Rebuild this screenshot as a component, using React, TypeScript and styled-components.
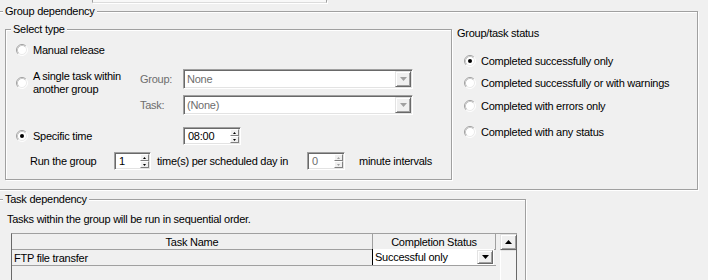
import React from "react";
import styled, { createGlobalStyle } from "styled-components";

const Global = createGlobalStyle`
  html, body { margin: 0; padding: 0; background: #f0f0f0; overflow: hidden; }
  body { font-family: "Liberation Sans", Arial, sans-serif; font-size: 11px; letter-spacing: -0.25px; color: #000; }
`;

const Page = styled.div`
  width: 708px;
  height: 280px;
  overflow: hidden;
  background: #f0f0f0;
  display: flex;
  flex-direction: column;
  align-items: flex-start;
`;

const TopStrip = styled.div`
  flex: none;
  margin-left: 92px;
  width: 233px;
  height: 2px;
  background: #f8f8f8;
  border-left: 1px solid #a0a0a0;
  border-right: 1px solid #a0a0a0;
  border-bottom: 1px solid #dcdcdc;
  box-shadow: 1px 1px 0 #fff;
`;

const GroupBox = styled.div<{ $w: number; $h: number; $mt?: number; $ml?: number }>`
  position: relative;
  flex: none;
  box-sizing: border-box;
  width: ${(p) => p.$w}px;
  height: ${(p) => p.$h}px;
  margin-top: ${(p) => p.$mt ?? 0}px;
  margin-left: ${(p) => p.$ml ?? 0}px;
  border: 1px solid #a0a0a0;
  box-shadow: 1px 1px 0 #fff, inset 1px 1px 0 #fff;
`;

const Legend = styled.span<{ $left: number }>`
  position: absolute;
  top: -8px;
  left: ${(p) => p.$left}px;
  padding: 0 2px;
  background: #f0f0f0;
  line-height: 14px;
  white-space: nowrap;
`;

const GroupDepBody = styled.div`
  display: flex;
  align-items: flex-start;
  padding: 14px 0 0 6px;
`;

const SelectBody = styled.div`
  display: flex;
  flex-direction: column;
  padding: 10px 0 0 10px;
`;

const Row = styled.div<{ $mt?: number; $h: number }>`
  display: flex;
  align-items: center;
  height: ${(p) => p.$h}px;
  margin-top: ${(p) => p.$mt ?? 0}px;
`;

const DualRow = styled.div`
  display: flex;
  align-items: flex-start;
  margin-top: 9px;
  height: 46px;
`;

const RadioLabel = styled.label<{ $w?: number; $mt?: number }>`
  display: flex;
  align-items: center;
  gap: 5px;
  flex: none;
  width: ${(p) => (p.$w ? `${p.$w}px` : "auto")};
  margin-top: ${(p) => p.$mt ?? 0}px;
  line-height: 13px;
  white-space: nowrap;
`;

const FieldGrid = styled.div`
  display: grid;
  grid-template-columns: 43px 230px;
  grid-auto-rows: 20px;
  row-gap: 6px;
  align-items: center;
`;

const DimLabel = styled.span`
  color: #6d6d6d;
  line-height: 14px;
`;

const Sunken = styled.div<{ $w: number; $h: number }>`
  box-sizing: border-box;
  display: flex;
  align-items: stretch;
  width: ${(p) => p.$w}px;
  height: ${(p) => p.$h}px;
  padding: 1px;
  background: #fff;
  border: 1px solid;
  border-color: #a0a0a0 #fff #fff #a0a0a0;
  box-shadow: inset 1px 1px 0 #696969, inset -1px -1px 0 #e3e3e3;
`;

const FieldText = styled.span<{ $dim?: boolean; $pl?: number }>`
  flex: 1;
  display: flex;
  align-items: center;
  padding-left: ${(p) => p.$pl ?? 2}px;
  color: ${(p) => (p.$dim ? "#6d6d6d" : "#000")};
  white-space: nowrap;
  overflow: hidden;
`;

const RaisedButton = styled.div<{ $w: number; $h?: number }>`
  box-sizing: border-box;
  flex: none;
  display: flex;
  align-items: center;
  justify-content: center;
  width: ${(p) => p.$w}px;
  height: ${(p) => (p.$h ? `${p.$h}px` : "auto")};
  background: #f0f0f0;
  border: 1px solid;
  border-color: #e3e3e3 #696969 #696969 #e3e3e3;
  box-shadow: inset 1px 1px 0 #fff, inset -1px -1px 0 #a0a0a0;
`;

const SpinColumn = styled.div`
  display: flex;
  flex-direction: column;
  flex: none;
`;

const SpinButton = styled.div`
  box-sizing: border-box;
  width: 9px;
  height: 7px;
  display: flex;
  align-items: center;
  justify-content: center;
  background: #f0f0f0;
  border: 1px solid;
  border-color: #fff #808080 #808080 #fff;
`;

const PlainText = styled.span<{ $w?: number; $ml?: number }>`
  flex: none;
  width: ${(p) => (p.$w ? `${p.$w}px` : "auto")};
  margin-left: ${(p) => p.$ml ?? 0}px;
  line-height: 14px;
  white-space: nowrap;
`;

const SpinWrap = styled.div`
  flex: none;
`;

const StatusColumn = styled.div`
  display: flex;
  flex-direction: column;
  padding-left: 5px;
`;

const StatusTitle = styled.span`
  line-height: 14px;
`;

const StatusItem = styled(RadioLabel)`
  height: 16px;
  margin-left: 7px;
`;

const TaskBody = styled.div`
  display: flex;
  flex-direction: column;
  align-items: flex-start;
  padding: 12px 0 0 8px;
`;

const Note = styled.span`
  line-height: 14px;
`;

const TableFrame = styled.div`
  box-sizing: border-box;
  display: flex;
  width: 506px;
  height: 70px;
  margin: 7px 0 0 4px;
  border-top: 1px solid #a0a0a0;
  border-left: 1px solid #696969;
`;

const GridArea = styled.div`
  display: flex;
  flex-direction: column;
  width: 488px;
`;

const GridRow = styled.div`
  display: flex;
  width: 484px;
  height: 16px;
  box-sizing: border-box;
  border-bottom: 1px solid #a0a0a0;
`;

const HeaderCell = styled.div<{ $w: number }>`
  box-sizing: border-box;
  width: ${(p) => p.$w}px;
  display: flex;
  align-items: center;
  justify-content: center;
  border-right: 1px solid #a0a0a0;
  line-height: 14px;
`;

const Cell = styled.div<{ $w: number }>`
  box-sizing: border-box;
  width: ${(p) => p.$w}px;
  display: flex;
  align-items: center;
  padding-left: 2px;
  line-height: 14px;
  white-space: nowrap;
`;

const CellCombo = styled.div`
  box-sizing: border-box;
  display: flex;
  align-items: stretch;
  width: 122px;
  height: 16px;
  margin-top: -1px;
  background: #fff;
  border-left: 1px solid #000;
  padding: 1px 1px 1px 0;
`;

const Scrollbar = styled.div`
  box-sizing: border-box;
  display: flex;
  flex-direction: column;
  width: 17px;
  border-right: 1px solid #696969;
`;

const ScrollTrack = styled.div`
  flex: 1;
  background: #f4f4f4;
  border-left: 1px solid #fff;
  border-top: 1px solid #e3e3e3;
`;

type ArrowProps = { dir: "up" | "down"; color: string; w?: number; h?: number };
const Arrow = ({ dir, color, w = 7, h = 4 }: ArrowProps) => (
  <svg width={w} height={h} viewBox={`0 0 ${w} ${h}`} style={{ display: "block" }}>
    {dir === "down" ? (
      <polygon points={`0,0 ${w},0 ${w / 2},${h}`} fill={color} />
    ) : (
      <polygon points={`0,${h} ${w},${h} ${w / 2},0`} fill={color} />
    )}
  </svg>
);

const Radio = ({ checked }: { checked?: boolean }) => (
  <svg width={12} height={12} viewBox="0 0 12 12" style={{ display: "block", flex: "none" }}>
    <circle cx={6} cy={6} r={5} fill="#fff" />
    <path d="M2.11 9.89 A5.5 5.5 0 0 1 9.89 2.11" stroke="#a0a0a0" strokeWidth={1} fill="none" />
    <path d="M9.89 2.11 A5.5 5.5 0 0 1 2.11 9.89" stroke="#ffffff" strokeWidth={1} fill="none" />
    <path d="M2.82 9.18 A4.5 4.5 0 0 1 9.18 2.82" stroke="#c8c8c8" strokeWidth={1} fill="none" />
    <path d="M9.18 2.82 A4.5 4.5 0 0 1 2.82 9.18" stroke="#ececec" strokeWidth={1} fill="none" />
    {checked && <circle cx={6} cy={6} r={2} fill="#000" />}
  </svg>
);

const Combo = ({ text }: { text: string }) => (
  <Sunken $w={230} $h={20}>
    <FieldText $dim>{text}</FieldText>
    <RaisedButton $w={16}>
      <Arrow dir="down" color="#a0a0a0" />
    </RaisedButton>
  </Sunken>
);

const Spin = ({ value, w, dim }: { value: string; w: number; dim?: boolean }) => (
  <SpinWrap>
    <Sunken $w={w} $h={18}>
      <FieldText $dim={dim} $pl={3}>{value}</FieldText>
      <SpinColumn>
        <SpinButton>
          <Arrow dir="up" color={dim ? "#a0a0a0" : "#000"} w={3} h={2} />
        </SpinButton>
        <SpinButton>
          <Arrow dir="down" color={dim ? "#a0a0a0" : "#000"} w={3} h={2} />
        </SpinButton>
      </SpinColumn>
    </Sunken>
  </SpinWrap>
);

export default function App() {
  return (
    <>
      <Global />
      <Page>
        <TopStrip />
        <GroupBox $w={700} $h={179} $mt={8} $ml={-2}>
          <Legend $left={4}>Group dependency</Legend>
          <GroupDepBody>
            <GroupBox $w={447} $h={151} $mt={3}>
              <Legend $left={5}>Select type</Legend>
              <SelectBody>
                <Row $h={20}>
                  <RadioLabel>
                    <Radio />
                    Manual release
                  </RadioLabel>
                </Row>
                <DualRow>
                  <RadioLabel $w={124} $mt={1}>
                    <Radio />
                    <span>
                      A single task within
                      <br />
                      another group
                    </span>
                  </RadioLabel>
                  <FieldGrid>
                    <DimLabel>Group:</DimLabel>
                    <Combo text="None" />
                    <DimLabel>Task:</DimLabel>
                    <Combo text="(None)" />
                  </FieldGrid>
                </DualRow>
                <Row $h={18} $mt={12}>
                  <RadioLabel $w={167}>
                    <Radio checked />
                    Specific time
                  </RadioLabel>
                  <Spin value="08:00" w={58} />
                </Row>
                <Row $h={18} $mt={7}>
                  <PlainText $w={84} $ml={14}>Run the group</PlainText>
                  <Spin value="1" w={37} />
                  <PlainText $w={150} $ml={6}>time(s) per scheduled day in</PlainText>
                  <Spin value="0" w={38} dim />
                  <PlainText $ml={14}>minute intervals</PlainText>
                </Row>
              </SelectBody>
            </GroupBox>
            <StatusColumn>
              <StatusTitle>Group/task status</StatusTitle>
              <StatusItem $mt={13}>
                <Radio checked />
                Completed successfully only
              </StatusItem>
              <StatusItem $mt={6}>
                <Radio />
                Completed successfully or with warnings
              </StatusItem>
              <StatusItem $mt={7}>
                <Radio />
                Completed with errors only
              </StatusItem>
              <StatusItem $mt={10}>
                <Radio />
                Completed with any status
              </StatusItem>
            </StatusColumn>
          </GroupDepBody>
        </GroupBox>
        <GroupBox $w={528} $h={110} $mt={9} $ml={-2}>
          <Legend $left={4}>Task dependency</Legend>
          <TaskBody>
            <Note>Tasks within the group will be run in sequential order.</Note>
            <TableFrame>
              <GridArea>
                <GridRow>
                  <HeaderCell $w={361}>Task Name</HeaderCell>
                  <HeaderCell $w={123}>Completion Status</HeaderCell>
                </GridRow>
                <GridRow>
                  <Cell $w={360}>FTP file transfer</Cell>
                  <CellCombo>
                    <FieldText $pl={2}>Successful only</FieldText>
                    <RaisedButton $w={16}>
                      <Arrow dir="down" color="#000" />
                    </RaisedButton>
                  </CellCombo>
                </GridRow>
              </GridArea>
              <Scrollbar>
                <RaisedButton $w={17} $h={16}>
                  <Arrow dir="up" color="#000" />
                </RaisedButton>
                <ScrollTrack />
              </Scrollbar>
            </TableFrame>
          </TaskBody>
        </GroupBox>
      </Page>
    </>
  );
}
